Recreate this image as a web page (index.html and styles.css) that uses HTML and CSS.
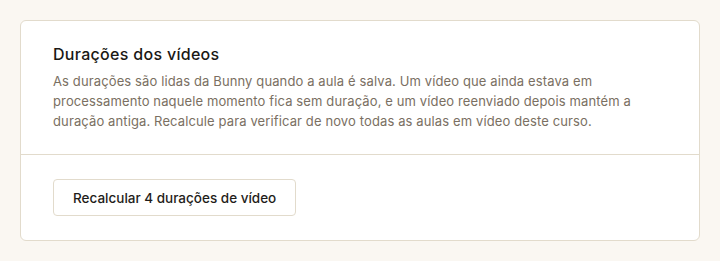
FILE: index.html
```html
<!DOCTYPE html>
<html lang="pt-BR">
<head>
    <meta charset="UTF-8">
    <meta name="viewport" content="width=device-width, initial-scale=1.0">
    <title>Durações dos vídeos</title>
    <link rel="stylesheet" href="styles.css">
</head>
<body>

<!-- Video durations card -->
<section class="card">
    <div class="card-header">
        <h2 class="card-title">Durações dos vídeos</h2>
        <p class="card-text">
            As durações são lidas da Bunny quando a aula é salva. Um vídeo que ainda estava em
            processamento naquele momento fica sem duração, e um vídeo reenviado depois mantém a
            duração antiga. Recalcule para verificar de novo todas as aulas em vídeo deste curso.
        </p>
    </div>

    <div class="card-body">
        <button class="btn-outline" type="button">Recalcular 4 durações de vídeo</button>
    </div>
</section>

</body>
</html>
```

FILE: styles.css
```css
* {
    margin: 0;
    padding: 0;
    box-sizing: border-box;
}

body {
    font-family: Inter, "Noto Sans", sans-serif;
    background-color: #faf7f2;
    padding: 20px;
}

.card {
    width: 680px;
    background-color: #fff;
    border: 1px solid #e2dbcc;
    border-radius: 6px;
}

.card-header {
    padding: 22px 32px 23px;
    border-bottom: 1px solid #e2dbcc;
}

.card-title {
    font-size: 16px;
    font-weight: 500;
    line-height: 22px;
    letter-spacing: 0.3px;
    color: #1a1815;
    margin-bottom: 6px;
}

.card-text {
    font-size: 13px;
    line-height: 20px;
    letter-spacing: 0.12px;
    color: #7a6f62;
}

.card-body {
    padding: 24px 32px;
}

.btn-outline {
    font-family: inherit;
    font-size: 13.5px;
    font-weight: 500;
    color: #1f1d1a;
    background-color: #fff;
    border: 1px solid #e2dbcc;
    border-radius: 4px;
    height: 37px;
    padding: 0 19px;
    cursor: pointer;
}

.btn-outline:hover {
    background-color: #faf7f2;
}
```
